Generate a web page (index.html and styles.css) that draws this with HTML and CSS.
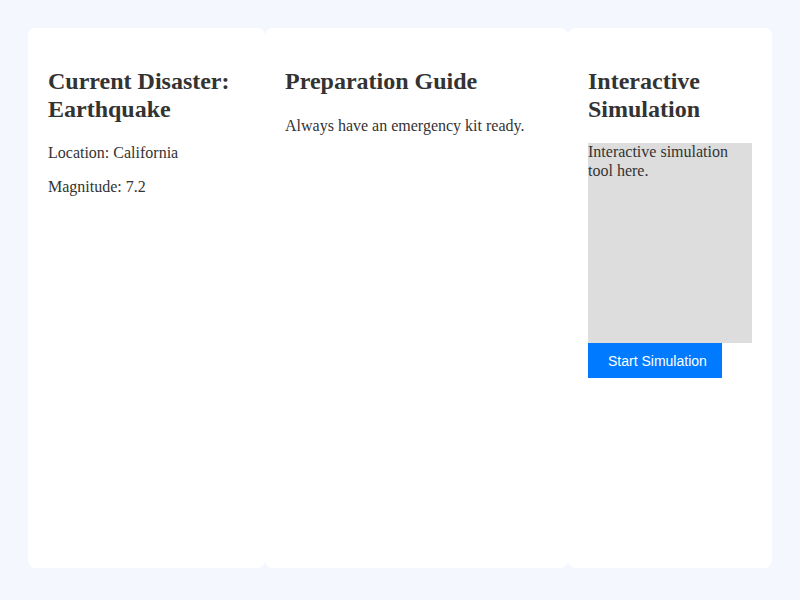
FILE: index.html
```html
<!DOCTYPE html>
<html>
<head>
<meta charset="utf-8">
<link rel="stylesheet" href="styles.css">
</head>
<body>
<div class="dashboard">
  <section class="card">
    <h2>Current Disaster: Earthquake</h2>
    <p>Location: California</p>
    <p>Magnitude: 7.2</p>
  </section>
  <section class="card">
    <h2>Preparation Guide</h2>
    <p>Always have an emergency kit ready.</p>
  </section>
  <section class="card">
    <h2>Interactive Simulation</h2>
    <div class="sim-box">Interactive simulation tool here.</div>
    <button class="sim-btn">Start Simulation</button>
  </section>
</div>
</body>
</html>
```

FILE: styles.css
```css
html, body {
  margin: 0;
  padding: 0;
}
body {
  background: #f4f8fe;
  font-family: "Liberation Serif", "Times New Roman", serif;
  color: #333;
}
.dashboard {
  display: grid;
  grid-template-columns: 237px 303px 204px;
  padding: 28px;
}
.card {
  background: #fff;
  border-radius: 8px;
  padding: 20px;
  height: 500px;
}
.card h2 {
  font-size: 24px;
  margin: 18px 0 20px;
  padding-top: 2px;
  line-height: 27.6px;
}
.card p {
  font-size: 16px;
  margin: 16px 0;
  padding-top: 1px;
  line-height: 17px;
}
.sim-box {
  background: #ddd;
  height: 200px;
  font-size: 16px;
  line-height: 18.4px;
}
.sim-btn {
  display: block;
  box-sizing: border-box;
  background: #007bff;
  color: #fff;
  border: none;
  font-family: "Liberation Sans", Arial, sans-serif;
  font-size: 14px;
  padding: 0 20px;
  width: 134px;
  height: 35px;
  white-space: nowrap;
  cursor: pointer;
}
```
